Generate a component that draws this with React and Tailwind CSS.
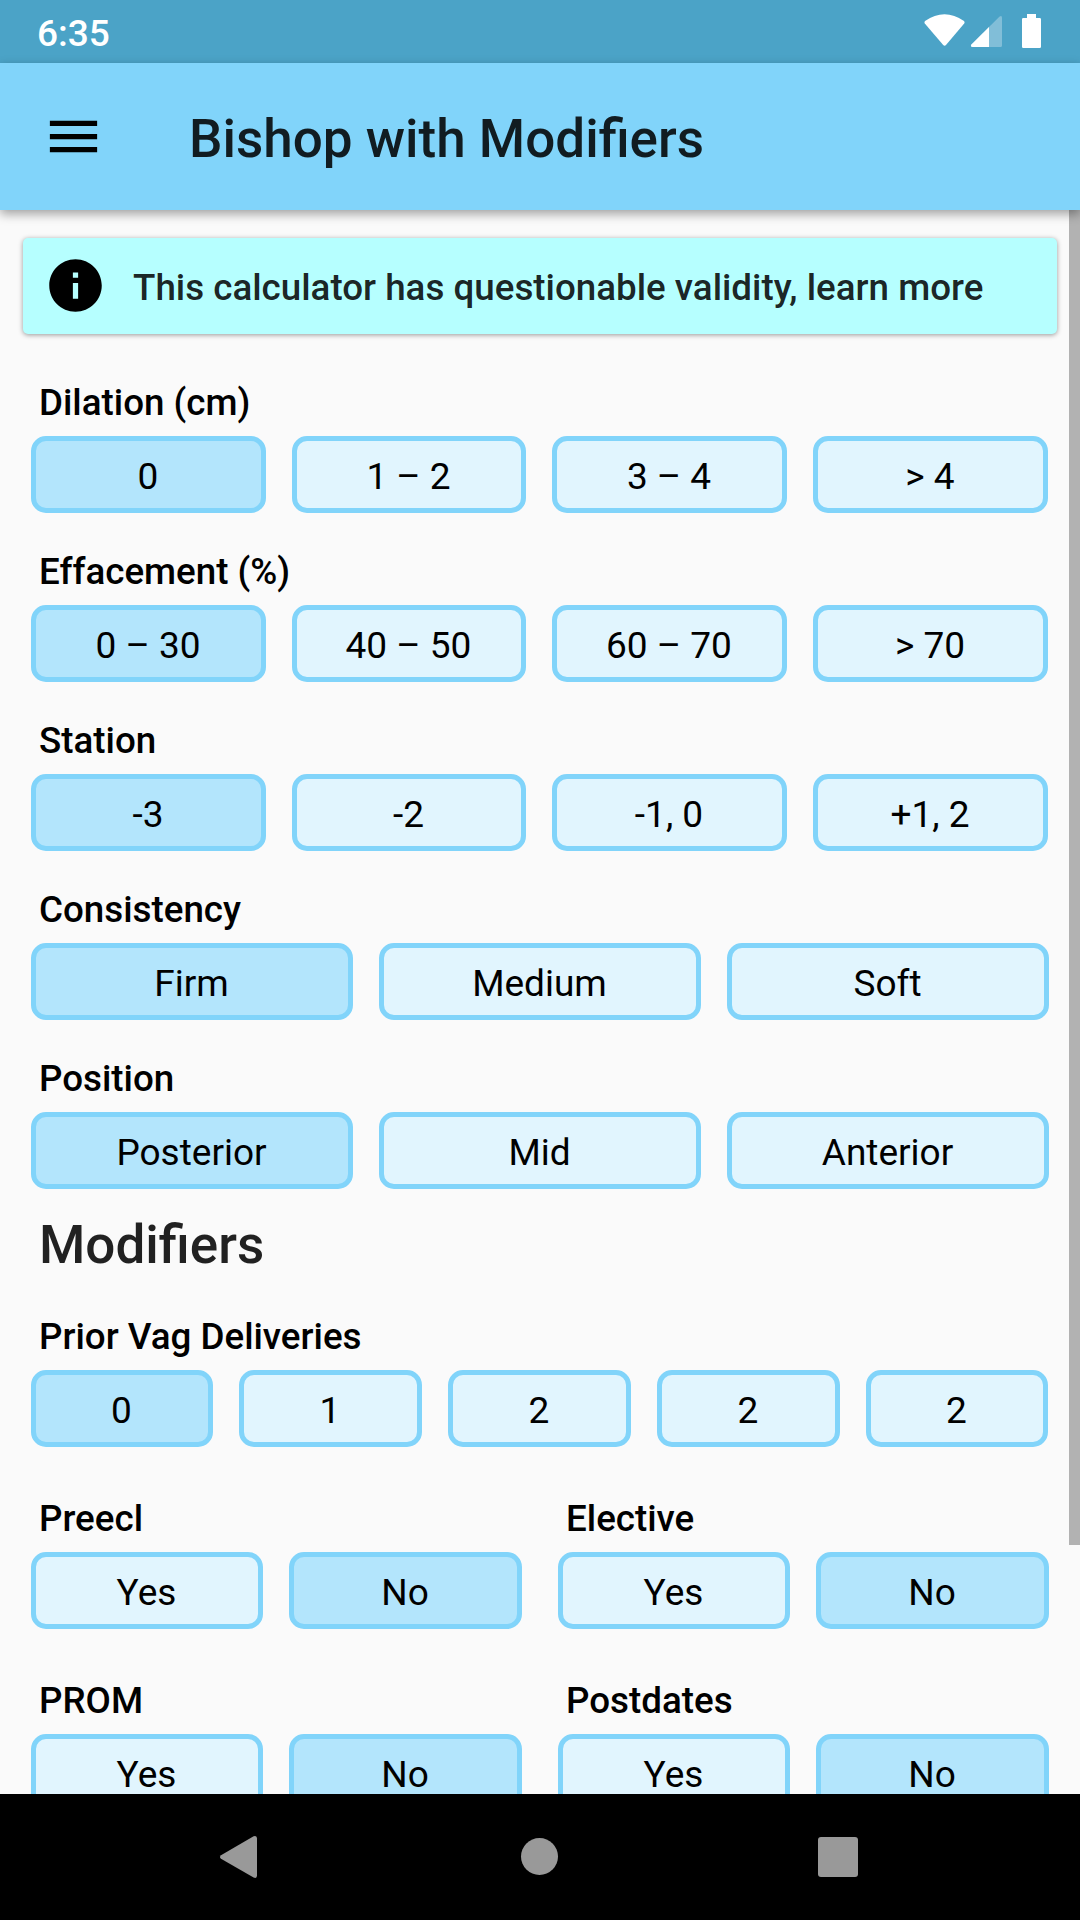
const OPTION_COLUMNS = {
  2: "grid-cols-[232px_233px]",
  3: "grid-cols-[322px_322px_322px]",
  4: "grid-cols-[235px_234px_235px_235px]",
  5: "grid-cols-[182px_183px_183px_183px_182px]",
};

function OptionGroup({ label, options, selected }) {
  return (
    <section>
      <h3 className="ml-[8px] h-[43px] leading-[43px] mb-[12px] text-[36.75px] font-medium text-black whitespace-nowrap">
        {label}
      </h3>
      <div className={`grid justify-start gap-[26px] ${OPTION_COLUMNS[options.length]}`}>
        {options.map((option, i) => (
          <button
            key={i}
            className={`h-[77px] rounded-[15px] border-[5px] border-[#81d4fa] pt-[4px] pr-[1px] text-[37px] leading-[37px] text-black flex items-center justify-center ${
              i === selected ? "bg-[#b3e5fc]" : "bg-[#e1f5fe]"
            }`}
          >
            {option}
          </button>
        ))}
      </div>
    </section>
  );
}

function StatusBar() {
  return (
    <div className="h-[63px] shrink-0 bg-[#4ba3c7] flex justify-between text-white">
      <span className="ml-[37px] mt-[12px] text-[37px] leading-[43px] font-medium">6:35</span>
      <svg className="w-[160px] h-[63px]" viewBox="920 0 160 63" fill="#fff">
        <path d="M925 21Q944.5 7.4 964 21Q965.2 22.2 964.2 23.6L946 45Q944.6 46.4 943.2 45L924.8 23.6Q923.8 22.2 925 21Z" />
        <path d="M1002 18V45.5Q1002 47 1000.5 47H972.5Q970 46.6 971.4 44.4L999.6 16.6Q1002 15 1002 18Z" fillOpacity=".3" />
        <path d="M989 27V47H972.5Q970 46.6 971.4 44.4Z" />
        <path d="M1027 14H1036V18H1039.7Q1041 18 1041 19.3V46.7Q1041 48 1039.7 48H1023.3Q1022 48 1022 46.7V19.3Q1022 18 1023.3 18H1027Z" />
      </svg>
    </div>
  );
}

function AppBar() {
  return (
    <header className="relative z-10 h-[147px] shrink-0 bg-[#81d4fa] flex items-center pl-[42px] shadow-[0_4px_10px_rgba(0,0,0,0.36)]">
      <svg className="size-[63px]" viewBox="0 0 24 24" fill="#000">
        <path d="M3 18h18v-2H3v2zm0-5h18v-2H3v2zm0-7v2h18V6H3z" />
      </svg>
      <h1 className="ml-[84px] mt-[5px] text-[53px] leading-[62px] font-medium text-black/87">Bishop with Modifiers</h1>
    </header>
  );
}

function Notice() {
  return (
    <div className="ml-[23px] mt-[28px] w-[1034px] h-[96px] rounded-[5px] bg-[#b6ffff] flex items-center pl-[21px] shadow-[0_1px_5px_rgba(0,0,0,0.4)]">
      <svg className="size-[63px] mb-[1px]" viewBox="0 0 24 24" fill="#000">
        <path d="M12 2C6.48 2 2 6.48 2 12s4.48 10 10 10 10-4.48 10-10S17.52 2 12 2zm1 15h-2v-6h2v6zm0-8h-2V7h2v2z" />
      </svg>
      <span className="ml-[26px] mt-[3px] text-[36.75px] leading-[43px] font-medium text-black/87 whitespace-nowrap">
        This calculator has questionable validity, learn more
      </span>
    </div>
  );
}

function NavBar() {
  return (
    <nav className="h-[126px] shrink-0 bg-black">
      <svg className="w-[1080px] h-[126px]" viewBox="0 1794 1080 126" fill="#999">
        <path d="M221 1855.2L253.6 1836.2Q257 1835 257 1838.4V1875.6Q257 1879 253.6 1877.6L221 1858.8Q219 1857 221 1855.2Z" />
        <circle cx="539.5" cy="1856.5" r="18.5" />
        <rect x="818" y="1837" width="40" height="40" rx="3" />
      </svg>
    </nav>
  );
}

export default function App() {
  return (
    <div className="w-[1080px] h-[1920px] overflow-hidden flex flex-col bg-[#fafafa] font-['Roboto',sans-serif]">
      <StatusBar />
      <AppBar />
      <main className="relative h-[1584px] shrink-0 overflow-hidden">
        <Notice />
        <div className="ml-[31px] mt-[47px] flex flex-col gap-[37px]">
          <OptionGroup label="Dilation (cm)" options={["0", "1 – 2", "3 – 4", "> 4"]} selected={0} />
          <OptionGroup label="Effacement (%)" options={["0 – 30", "40 – 50", "60 – 70", "> 70"]} selected={0} />
          <OptionGroup label="Station" options={["-3", "-2", "-1, 0", "+1, 2"]} selected={0} />
          <OptionGroup label="Consistency" options={["Firm", "Medium", "Soft"]} selected={0} />
          <OptionGroup label="Position" options={["Posterior", "Mid", "Anterior"]} selected={0} />
        </div>
        <h2 className="ml-[39px] mt-[25px] text-[53px] leading-[62px] font-medium text-black/87">Modifiers</h2>
        <div className="ml-[31px] mt-[39px] flex flex-col gap-[50px]">
          <OptionGroup label="Prior Vag Deliveries" options={["0", "1", "2", "2", "2"]} selected={0} />
          <div className="flex gap-[36px]">
            <OptionGroup label="Preecl" options={["Yes", "No"]} selected={1} />
            <OptionGroup label="Elective" options={["Yes", "No"]} selected={1} />
          </div>
          <div className="flex gap-[36px]">
            <OptionGroup label="PROM" options={["Yes", "No"]} selected={1} />
            <OptionGroup label="Postdates" options={["Yes", "No"]} selected={1} />
          </div>
        </div>
        <div className="absolute right-0 top-0 w-[11px] h-[1335px] bg-[#b2b2b2]" />
      </main>
      <NavBar />
    </div>
  );
}
